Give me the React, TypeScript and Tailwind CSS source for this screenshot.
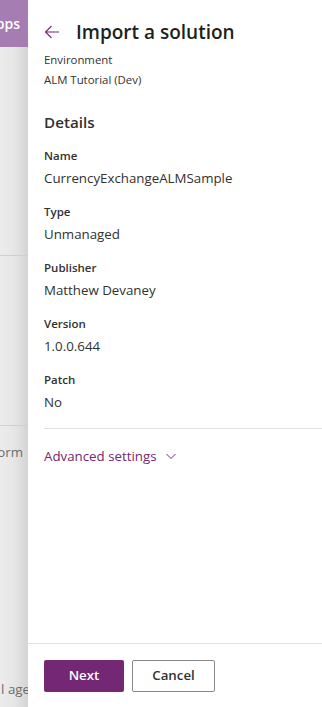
import React from "react";

const font = { fontFamily: '"Open Sans", "Noto Sans", sans-serif' };

function Field({ label, value }: { label: string; value: string }) {
  return (
    <div className="flex flex-col">
      <div className="text-[11.5px] leading-[16px] font-semibold text-[#323130]">{label}</div>
      <div className="mt-1 text-[13.3px] leading-[20px] text-[#323130]">{value}</div>
    </div>
  );
}

export default function App() {
  return (
    <div className="flex h-[707px] w-[322px] overflow-hidden bg-white" style={font}>
      {/* background page strip */}
      <div className="relative flex w-[28px] shrink-0 flex-col overflow-hidden bg-gradient-to-r from-[#ececec] via-[#e6e6e6] to-[#d4d4d4]">
        <div className="flex h-[47px] shrink-0 items-center justify-end bg-[#a67db3] pr-[8px]">
          <span className="whitespace-nowrap text-[14px] font-semibold text-white">Apps</span>
        </div>
        <div className="mt-[208px] h-px w-full bg-[#cfcfcf]" />
        <div className="mt-[169px] h-px w-full bg-[#cfcfcf]" />
        <div className="mt-[16px] flex justify-end pr-[5px]">
          <span className="whitespace-nowrap text-[13.3px] leading-[20px] text-[#6b6b6b]">Platform</span>
        </div>
        <div className="mt-[217px] flex justify-end">
          <span className="mr-[-2px] whitespace-nowrap text-[13.3px] leading-[20px] text-[#6b6b6b]">l age</span>
        </div>
      </div>

      {/* panel */}
      <div className="flex flex-1 flex-col bg-white shadow-[-2px_0_6px_rgba(0,0,0,0.12)]">
        <div className="flex flex-1 flex-col pl-[16px] pt-[18px] pr-0">
          <div className="flex items-center">
            <svg width="16" height="16" viewBox="0 0 16 16" className="shrink-0" fill="none">
              <path d="M15 8H1.5M7.5 2L1.5 8l6 6" stroke="#742774" strokeWidth="1.1" />
            </svg>
            <h1 className="ml-[16px] text-[19px] leading-[28px] font-semibold text-[#201f1e]">Import a solution</h1>
          </div>
          <div className="mt-[6px] text-[11.4px] leading-[16px] text-[#323130]">Environment</div>
          <div className="mt-[4px] text-[11.4px] leading-[16px] text-[#323130]">ALM Tutorial (Dev)</div>

          <div className="mt-[23px] text-[15.2px] leading-[22px] font-semibold text-[#323130]">Details</div>

          <div className="mt-[15px] flex flex-col gap-[16px]">
            <Field label="Name" value="CurrencyExchangeALMSample" />
            <Field label="Type" value="Unmanaged" />
            <Field label="Publisher" value="Matthew Devaney" />
            <Field label="Version" value="1.0.0.644" />
            <Field label="Patch" value="No" />
          </div>

          <div className="mt-[16px] h-px bg-[#e1dfdd]" />

          <div className="mt-[17px] flex items-center text-[13.3px] leading-[20px] text-[#742774]">
            <span>Advanced settings</span>
            <svg width="12" height="12" viewBox="0 0 12 12" className="ml-[8px]" fill="none">
              <path d="M1.5 4l4.5 4.5L10.5 4" stroke="#742774" strokeWidth="1" />
            </svg>
          </div>
        </div>

        <div className="flex h-[64px] shrink-0 gap-[8px] border-t border-[#e1dfdd] pl-[16px] pt-[16px]">
          <button className="h-[32px] w-[80px] rounded-[2px] bg-[#742774] text-[13.3px] font-semibold text-white">Next</button>
          <button className="h-[32px] w-[83px] rounded-[2px] border border-[#8a8886] bg-white text-[13.3px] font-semibold text-[#323130]">Cancel</button>
        </div>
      </div>
    </div>
  );
}
